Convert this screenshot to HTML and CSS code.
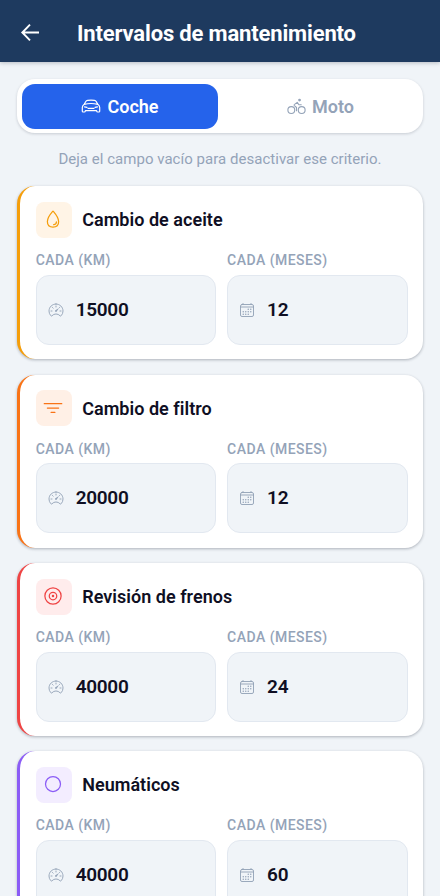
FILE: index.html
```html
<!DOCTYPE html>
<html lang="es">
<head>
<meta charset="utf-8">
<meta name="viewport" content="width=device-width, initial-scale=1">
<title>Intervalos de mantenimiento</title>
<link rel="stylesheet" href="styles.css">
</head>
<body>
<svg class="sprite" aria-hidden="true">
  <symbol id="gauge" viewBox="0 0 512 512"><path d="M326.1 231.9l-47.5 75.5a31 31 0 01-7 7 30.11 30.11 0 01-35-49l75.5-47.5a10.23 10.23 0 0111.7 0 10.06 10.06 0 012.3 14z" fill="currentColor" stroke="none"/><path d="M256 64C132.3 64 32 164.2 32 287.9a223.18 223.18 0 0056.3 148.5c1.1 1.2 2.1 2.4 3.2 3.5a25.19 25.19 0 0037.1-.1 173.13 173.13 0 01254.8 0 25.19 25.19 0 0037.1.1l3.2-3.5A223.18 223.18 0 00480 287.9C480 164.2 379.7 64 256 64zM256 128v32M416 288h-32M128 288H96M165.5 197.5l-22.600-22.600M346.500 197.500l22.600-22.600"/></symbol>
  <symbol id="calendar" viewBox="0 0 512 512"><rect x="48" y="80" width="416" height="384" rx="48"/><path d="M128 48v32M384 48v32M464 160H48"/><g fill="currentColor" stroke="none"><circle cx="296" cy="232" r="24"/><circle cx="376" cy="232" r="24"/><circle cx="296" cy="312" r="24"/><circle cx="376" cy="312" r="24"/><circle cx="136" cy="312" r="24"/><circle cx="216" cy="312" r="24"/><circle cx="136" cy="392" r="24"/><circle cx="216" cy="392" r="24"/><circle cx="296" cy="392" r="24"/></g></symbol>
</svg>
<header class="topbar">
  <svg class="back" viewBox="0 0 24 24"><path d="M12 3.600L4.300 11.500l7.700 7.900M4.500 11.500H21"/></svg>
  <h1>Intervalos de mantenimiento</h1>
</header>
<main>
  <nav class="tabs">
    <button class="tab active"><svg class="icon" viewBox="0 0 20 20"><path d="M3.200 8.300L4.800 5.500C5.200 4.800 5.800 4.400 6.600 4.300c2.300-.3 4.500-.3 6.800 0 .8.100 1.400.5 1.800 1.200l1.600 2.800M3.200 8.300C2 9.100 1.300 10.200 1.300 11.500v3.700c0 .5.300.8.800.8h1.300c.5 0 .8-.3.900-.8l.1-.5h11.200l.1.500c.1.500.4.800.9.800h1.300c.5 0 .8-.3.800-.8v-3.700c0-1.300-.7-2.400-1.900-3.200M3.200 8.300c4.200-1 9.400-1 13.600 0M3.500 10.800l2.500.5M16.500 10.800l-2.500.5M7 12.300h6"/></svg><span>Coche</span></button>
    <button class="tab"><svg class="icon moto" viewBox="0 0 512 512"><circle cx="116" cy="352" r="92"/><circle cx="396" cy="352" r="92"/><path d="M256 368v-86l-56-50c-12-12-10-24 4-34l72-54 44 64h64"/><circle cx="338" cy="84" r="22" fill="currentColor"/></svg><span>Moto</span></button>
  </nav>
  <p class="hint">Deja el campo vacío para desactivar ese criterio.</p>

  <section class="card oil">
    <div class="head"><span class="badge"><svg viewBox="0 0 512 512"><path d="M400 320c0 88.370-55.630 144-144 144s-144-55.630-144-144c0-94.830 103.230-222.850 134.890-259.880a12 12 0 0118.230 0C296.770 97.150 400 225.170 400 320z"/><path d="M344 328a72 72 0 01-72 72"/></svg></span><h2>Cambio de aceite</h2></div>
    <div class="fields">
      <label>CADA (KM)<span class="field"><svg><use href="#gauge"/></svg><b>15000</b></span></label>
      <label>CADA (MESES)<span class="field"><svg><use href="#calendar"/></svg><b>12</b></span></label>
    </div>
  </section>
  <section class="card filter">
    <div class="head"><span class="badge"><svg viewBox="0 0 512 512"><path d="M32 144h448M112 256h288M208 368h96"/></svg></span><h2>Cambio de filtro</h2></div>
    <div class="fields">
      <label>CADA (KM)<span class="field"><svg><use href="#gauge"/></svg><b>20000</b></span></label>
      <label>CADA (MESES)<span class="field"><svg><use href="#calendar"/></svg><b>12</b></span></label>
    </div>
  </section>
  <section class="card brakes">
    <div class="head"><span class="badge"><svg viewBox="0 0 512 512"><circle cx="256" cy="256" r="208"/><circle cx="256" cy="256" r="96"/><circle cx="256" cy="256" r="32" fill="currentColor" stroke="none"/></svg></span><h2>Revisión de frenos</h2></div>
    <div class="fields">
      <label>CADA (KM)<span class="field"><svg><use href="#gauge"/></svg><b>40000</b></span></label>
      <label>CADA (MESES)<span class="field"><svg><use href="#calendar"/></svg><b>24</b></span></label>
    </div>
  </section>
  <section class="card tyres">
    <div class="head"><span class="badge"><svg viewBox="0 0 512 512"><circle cx="256" cy="256" r="192"/></svg></span><h2>Neumáticos</h2></div>
    <div class="fields">
      <label>CADA (KM)<span class="field"><svg><use href="#gauge"/></svg><b>40000</b></span></label>
      <label>CADA (MESES)<span class="field"><svg><use href="#calendar"/></svg><b>60</b></span></label>
    </div>
  </section>
</main>
</body>
</html>
```
FILE: styles.css
```css
* { box-sizing: border-box; }
html, body { height: 100%; }
body {
  margin: 0;
  overflow: hidden;
  background: #f0f4f8;
  color: #0f0f23;
  font-family: Roboto, sans-serif;
}
h1, h2, p { margin: 0; }
svg {
  display: block;
  flex: none;
  fill: none;
  stroke: currentColor;
  stroke-width: 32;
  stroke-linecap: round;
  stroke-linejoin: round;
}
.sprite { display: none; }
.topbar {
  position: relative;
  display: flex;
  align-items: center;
  height: 62px;
  padding: 4px 18px 0;
  background: #1e3a5f;
  color: #fff;
  box-shadow: 0 1px 4px rgba(15, 23, 42, .25);
}
.back { width: 24px; height: 24px; margin-top: -1px; stroke-width: 1.900; stroke-linecap: butt; stroke-linejoin: miter; }
h1 { margin: 1px 0 0 35px; font-size: 22px; line-height: 28px; font-weight: 700; letter-spacing: -.16px; white-space: nowrap; }
main { padding: 17px 17px 0; }
.tabs {
  display: flex;
  gap: 4px;
  height: 54px;
  padding: 5px 4px 4px 5px;
  border-radius: 18px;
  background: #fff;
  box-shadow: 0 1px 3px rgba(15, 23, 42, .18);
}
.tab {
  display: flex;
  flex: 1;
  align-items: center;
  justify-content: center;
  gap: 6px;
  padding: 1px 0 0;
  border: 0;
  border-radius: 13px;
  background: none;
  color: #94a3b8;
  font: 600 18px/24px Roboto, sans-serif;
}
.tab.active { flex: 0 0 196px; background: #2563eb; color: #fff; }
.icon { width: 20px; height: 20px; margin-top: -2px; stroke-width: 1.200; }
.moto { width: 19px; height: 19px; stroke-width: 30; }
.hint {
  margin-top: 16px;
  font-size: 15px;
  line-height: 20px;
  letter-spacing: .03px;
  text-align: center;
  color: #94a3b8;
}
.card {
  height: 173.200px;
  margin-bottom: 15.200px;
  padding: 15.500px 15.500px 0 15.700px;
  border-left: 3px solid var(--accent);
  border-radius: 18px;
  background: #fff;
  box-shadow: 0 1px 3px rgba(15, 23, 42, .3);
}
.hint + .card { margin-top: 17.300px; }
.oil { --accent: #f59e0b; --tint: #fff4e6; }
.filter { --accent: #f97316; --tint: #fff0e6; }
.brakes { --accent: #ef4444; --tint: #ffecec; }
.tyres { --accent: #8b5cf6; --tint: #f3edff; }
.head { display: flex; align-items: center; gap: 10.500px; }
.badge {
  display: grid;
  place-items: center;
  width: 36px;
  height: 36px;
  border-radius: 8px;
  background: var(--tint);
  color: var(--accent);
}
.badge svg { width: 20px; height: 20px; margin: -1px 1px 0 0; }
h2 { margin-top: 1px; font-size: 18px; line-height: 24px; font-weight: 600; letter-spacing: .03px; }
.fields { display: grid; grid-template-columns: 1fr 1fr; gap: 11px; margin-top: 14.500px; }
label { font-size: 14px; line-height: 16px; font-weight: 500; letter-spacing: .47px; color: #94a3b8; }
.field {
  display: flex;
  align-items: center;
  gap: 12px;
  height: 70px;
  margin-top: 6.500px;
  padding-left: 11px;
  border: 1px solid #e2e8f0;
  border-radius: 13px;
  background: #f0f4f8;
}
.field svg { width: 16px; height: 16px; stroke-width: 30; }
.field b { color: #0f0f23; font-size: 19px; line-height: 24px; font-weight: 600; letter-spacing: -.3px; }
```
